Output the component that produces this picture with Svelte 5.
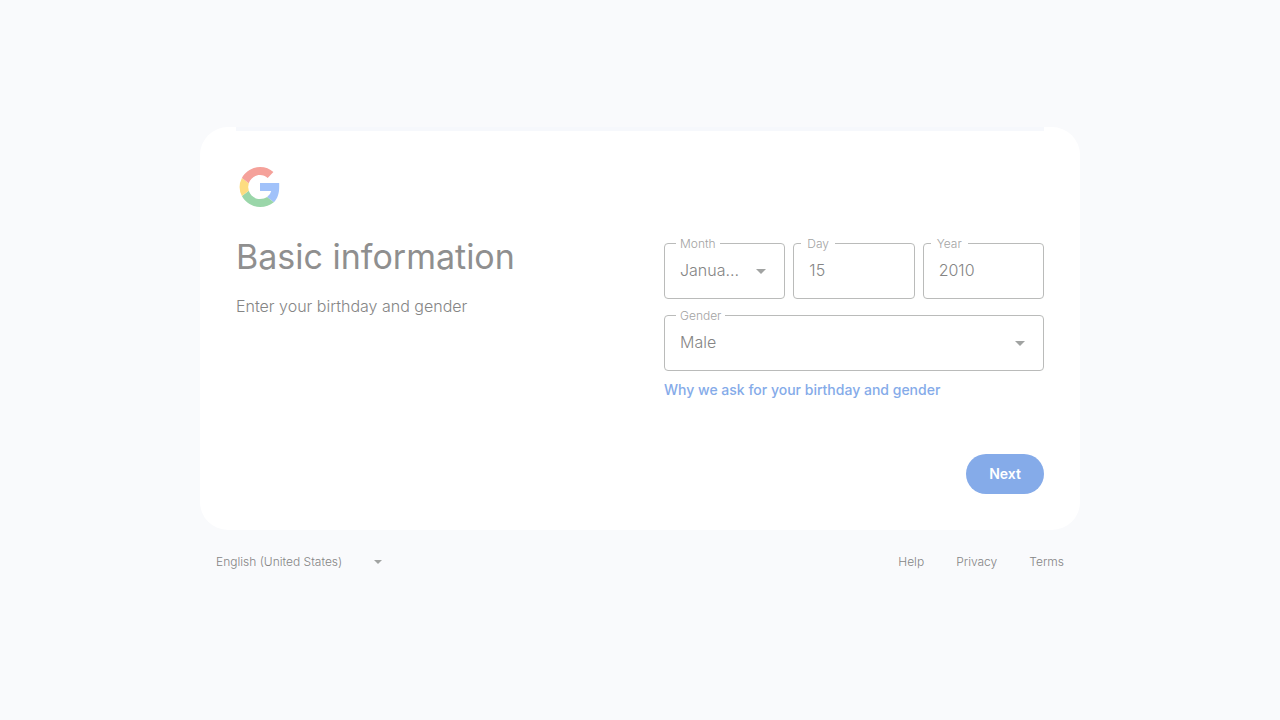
<script>
  const months = ['January', 'February', 'March', 'April', 'May', 'June', 'July', 'August', 'September', 'October', 'November', 'December'];
  const genders = ['Female', 'Male', 'Rather not say', 'Custom'];
  const links = ['Help', 'Privacy', 'Terms'];

  let month = $state('January');
  let day = $state('15');
  let year = $state('2010');
  let gender = $state('Male');
</script>

<div class="page">
  <main class="card">
    <div class="progress"></div>
    <svg class="logo" viewBox="0 0 48 48" aria-label="Google" role="img">
      <path fill="#a1c2fa" d="M43.200 20H24v8h11.200a9.600 9.600 0 0 1-4.100 6.100l6.700 5.200c3.700-3.500 5.400-9 5.400-15.100 0-1.400 0-2.800 0-4.200z" />
      <path fill="#9ad6a9" d="M24 44c5.400 0 10.100-1.700 13.800-4.700l-6.700-5.200c-1.900 1.200-4.200 2-7.100 2-5.200 0-9.600-3.500-11.200-8.300l-6.900 5.300C9.300 39.600 16.100 44 24 44z" />
      <path fill="#fddc80" d="M12.800 27.800a12 12 0 0 1 0-7.600l-6.900-5.300a20 20 0 0 0 0 18.200z" />
      <path fill="#f5a19a" d="M24 12c2.900 0 5.600 1 7.700 3l5.700-5.900C33.900 5.800 29.400 4 24 4 16.100 4 9.300 8.500 5.900 14.900l6.900 5.300C14.400 15.500 18.800 12 24 12z" />
    </svg>

    <div class="columns">
      <header>
        <h1>Basic information</h1>
        <p>Enter your birthday and gender</p>
      </header>

      <form onsubmit={(e) => e.preventDefault()}>
        <div class="fields">
          <div class="birthday">
            <div class="field">
              <label for="month">Month</label>
              <select id="month" bind:value={month}>
                {#each months as name}<option>{name}</option>{/each}
              </select>
              <svg class="arrow" viewBox="0 0 10 5" aria-hidden="true"><path d="M0 0h10L5 5z" /></svg>
            </div>
            <div class="field typed">
              <label for="day">Day</label>
              <input id="day" type="text" inputmode="numeric" bind:value={day} />
            </div>
            <div class="field typed">
              <label for="year">Year</label>
              <input id="year" type="text" inputmode="numeric" bind:value={year} />
            </div>
          </div>
          <div class="field">
            <label for="gender">Gender</label>
            <select id="gender" bind:value={gender}>
              {#each genders as name}<option>{name}</option>{/each}
            </select>
            <svg class="arrow" viewBox="0 0 10 5" aria-hidden="true"><path d="M0 0h10L5 5z" /></svg>
          </div>
        </div>
        <a class="why" href="#why">Why we ask for your birthday and gender</a>
        <button type="submit">Next</button>
      </form>
    </div>
  </main>

  <footer>
    <div class="language">
      <select aria-label="Language">
        <option>English (United States)</option>
      </select>
      <svg class="arrow small" viewBox="0 0 10 5" aria-hidden="true"><path d="M0 0h10L5 5z" /></svg>
    </div>
    <nav>
      {#each links as link}<a href="#{link.toLowerCase()}">{link}</a>{/each}
    </nav>
  </footer>
</div>

<style>
  :global(body) {
    background: #f9fafc;
  }

  .page {
    box-sizing: border-box;
    min-height: 100vh;
    max-width: 880px;
    margin: 0 auto;
    display: flex;
    flex-direction: column;
    justify-content: center;
    font-family: Inter, Roboto, sans-serif;
    font-weight: 300;
    color: #858585;
  }

  .card {
    position: relative;
    padding: 36px;
    border-radius: 28px;
    background: #fff;
  }

  .progress {
    position: absolute;
    top: 0;
    left: 36px;
    right: 36px;
    height: 4px;
    background: #f6f8fc;
  }

  .logo {
    display: block;
    width: 48px;
    height: 48px;
  }

  .columns {
    display: grid;
    grid-template-columns: 1fr 1fr;
    gap: 48px;
    padding-top: 24px;
  }

  h1 {
    margin: 0 0 16px;
    color: #8f8f8f;
    font-size: 34px;
    font-weight: 400;
    line-height: 44px;
  }

  p {
    margin: 0;
    font-size: 16px;
    line-height: 22px;
  }

  form {
    display: flex;
    flex-direction: column;
    align-items: flex-start;
    padding-top: 8px;
    min-width: 0;
  }

  .fields {
    width: 100%;
    display: grid;
    gap: 16px;
  }

  .birthday {
    display: grid;
    grid-template-columns: repeat(3, minmax(0, 1fr));
    gap: 8px;
  }

  .field {
    position: relative;
    display: grid;
  }

  .field label {
    position: absolute;
    top: -7px;
    left: 12px;
    padding: 0 4px;
    background: #fff;
    color: #a3a3a3;
    font-size: 12px;
    line-height: 16px;
  }

  .typed label {
    left: 8px;
    padding: 0 6px;
  }

  .field select,
  .field input {
    box-sizing: border-box;
    width: 100%;
    height: 56px;
    margin: 0;
    padding: 0 15px 2px;
    border: 1px solid #babbba;
    border-radius: 4px;
    background: transparent;
    color: #858585;
    font: 300 16px/24px Inter, Roboto, sans-serif;
  }

  .field select {
    appearance: none;
    padding-right: 45px;
    text-overflow: ellipsis;
    overflow: hidden;
    white-space: nowrap;
  }

  .arrow {
    position: absolute;
    top: calc(50% - 2px);
    right: 19px;
    width: 10px;
    height: 5px;
    fill: #a1a3a2;
    pointer-events: none;
  }

  .why {
    margin-top: 9px;
    color: #85abe9;
    font-size: 14px;
    font-weight: 500;
    line-height: 20px;
    text-decoration: none;
  }

  button {
    align-self: flex-end;
    min-width: 78px;
    height: 40px;
    margin-top: 54px;
    padding: 0 16px;
    border: 0;
    border-radius: 20px;
    background: #85abe9;
    color: #fff;
    font: 600 14px/20px Inter, Roboto, sans-serif;
  }

  footer {
    display: flex;
    align-items: center;
    justify-content: space-between;
    padding: 8px 0;
    font-size: 12px;
    line-height: 16px;
  }

  .language {
    position: relative;
    display: grid;
  }

  .language select {
    appearance: none;
    height: 48px;
    width: 200px;
    padding: 0 16px;
    border: 0;
    background: transparent;
    color: #858585;
    font: 300 12px/16px Inter, Roboto, sans-serif;
  }

  .arrow.small {
    right: 18px;
    width: 8px;
    height: 4px;
  }

  nav {
    display: flex;
    gap: 32px;
    padding-right: 16px;
  }

  nav a {
    color: inherit;
    text-decoration: none;
  }
</style>
